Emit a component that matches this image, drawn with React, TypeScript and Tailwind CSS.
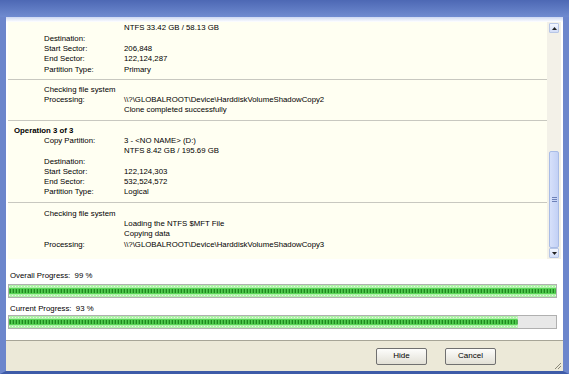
import React from "react";

type Row = { label?: string; value?: string };

const op2Top: Row[] = [
  { value: "NTFS 33.42 GB / 58.13 GB" },
  { label: "Destination:" },
  { label: "Start Sector:", value: "206,848" },
  { label: "End Sector:", value: "122,124,287" },
  { label: "Partition Type:", value: "Primary" },
];

const op2Check: Row[] = [
  { label: "Checking file system" },
  { label: "Processing:", value: "\\\\?\\GLOBALROOT\\Device\\HarddiskVolumeShadowCopy2" },
  { value: "Clone completed successfully" },
];

const op3Top: Row[] = [
  { label: "Copy Partition:", value: "3 - <NO NAME> (D:)" },
  { value: "NTFS 8.42 GB / 195.69 GB" },
  { label: "Destination:" },
  { label: "Start Sector:", value: "122,124,303" },
  { label: "End Sector:", value: "532,524,572" },
  { label: "Partition Type:", value: "Logical" },
];

const op3Check: Row[] = [
  { label: "Checking file system" },
  { value: "Loading the NTFS $MFT File" },
  { value: "Copying data" },
  { label: "Processing:", value: "\\\\?\\GLOBALROOT\\Device\\HarddiskVolumeShadowCopy3" },
];

function Rows({ rows }: { rows: Row[] }) {
  return (
    <div className="flex flex-col">
      {rows.map((r, i) => (
        <div key={i} className="flex h-[10.3px] items-center pl-[36px]">
          <span className="w-[80px] shrink-0 whitespace-nowrap">{r.label}</span>
          <span className="whitespace-nowrap">{r.value}</span>
        </div>
      ))}
    </div>
  );
}

function ProgressBar({ pct, id }: { pct: number; id: string }) {
  return (
    <div className="h-[14px] border border-[#b0b0b0] bg-[#e8e8e8]">
      <svg width="100%" height="12" className="block">
        <defs>
          <pattern id={id} width="3" height="12" patternUnits="userSpaceOnUse">
            <rect width="3" height="12" fill="#aef0a8" />
            <rect x="0" y="1" width="1" height="1" fill="#e6fbe2" />
            <rect x="0" y="10" width="1" height="1" fill="#e6fbe2" />
            <rect x="0" y="3" width="3" height="6" fill="#58d456" />
            <rect x="0.6" y="4" width="1.5" height="4" fill="#1e8a1e" />
          </pattern>
        </defs>
        <rect x="0" y="0" width={`${pct}%`} height="12" fill={`url(#${id})`} />
      </svg>
    </div>
  );
}

function XpButton({ children }: { children: React.ReactNode }) {
  return (
    <button className="h-[17px] w-[51px] rounded-[2px] border border-[#707070] bg-gradient-to-b from-[#fdfdfb] to-[#e2e0d6] text-[8px] text-black">
      {children}
    </button>
  );
}

export default function App() {
  return (
    <div
      className="flex h-[374px] w-[569px] flex-col overflow-hidden bg-[#3f5fb0] text-[7.8px] text-black"
      style={{ fontFamily: '"Liberation Sans", Arial, sans-serif' }}
    >
      {/* title bar remnant */}
      <div className="h-[17px] bg-gradient-to-b from-[#4d68b4] to-[#6f8bd0]" />
      <div className="flex flex-1 flex-col border-x-[6px] border-b-[3px] border-x-[#6c86cc] border-b-[#3e5ba8] bg-white">
        <div className="h-[5px] bg-gradient-to-b from-[#cbd7f2] to-white" />
        {/* list */}
        <div className="mx-[2px] flex h-[237px] bg-[#fffff2]">
          <div className="flex-1 overflow-hidden">
            <div className="pt-[1px]">
              <Rows rows={op2Top} />
            </div>
            <div className="mt-[5px] h-px w-full bg-[#c8c8c0]" />
            <div className="pt-[4px]">
              <Rows rows={op2Check} />
            </div>
            <div className="mt-[5px] h-px w-full bg-[#c8c8c0]" />
            <div className="pt-[4px]">
              <div className="flex h-[10.3px] items-center pl-[6px] font-bold">Operation 3 of 3</div>
              <Rows rows={op3Top} />
            </div>
            <div className="mt-[5px] h-px w-full bg-[#c8c8c0]" />
            <div className="pt-[5px]">
              <Rows rows={op3Check} />
            </div>
          </div>
          {/* scrollbar */}
          <div className="flex w-[14px] flex-col bg-[#f3f1e8] py-[1px] pl-[2px] pr-[2px]">
            <div className="flex h-[10px] items-center justify-center rounded-[1px] border border-[#b7c6e6] bg-gradient-to-b from-[#f4f7fe] to-[#d2ddf7]">
              <svg width="5" height="3" viewBox="0 0 5 3">
                <path d="M0 3 L2.5 0 L5 3 Z" fill="#222" />
              </svg>
            </div>
            <div className="flex-1" />
            <div className="flex h-[97px] items-center justify-center rounded-[2px] border border-[#a9bce6] bg-gradient-to-r from-[#d6e0fa] to-[#c3d1f5]">
              <svg width="5" height="6" viewBox="0 0 5 6">
                <path d="M0 0.5 H5 M0 2.5 H5 M0 4.5 H5" stroke="#6d81b8" strokeWidth="1" />
              </svg>
            </div>
            <div className="flex h-[10px] items-center justify-center rounded-[1px] border border-[#b7c6e6] bg-gradient-to-b from-[#f4f7fe] to-[#d2ddf7]">
              <svg width="5" height="3" viewBox="0 0 5 3">
                <path d="M0 0 L2.5 3 L5 0 Z" fill="#222" />
              </svg>
            </div>
          </div>
        </div>
        {/* progress */}
        <div className="flex flex-col pl-[2px] pr-[6px] pt-[12px]">
          <div className="pl-[2px] leading-[10px]">Overall Progress:&nbsp; 99 %</div>
          <div className="mt-[3px]">
            <ProgressBar pct={100} id="p1" />
          </div>
          <div className="mt-[6px] pl-[2px] leading-[10px]">Current Progress:&nbsp; 93 %</div>
          <div className="mt-[1px]">
            <ProgressBar pct={93} id="p2" />
          </div>
        </div>
        <div className="relative mt-[11px] flex flex-1 items-center justify-end gap-[18px] border-t border-[#a7a597] bg-[#ece9d8] pr-[67px]">
          <XpButton>Hide</XpButton>
          <XpButton>Cancel</XpButton>
          {/* resize grip */}
          <svg width="8" height="8" viewBox="0 0 8 8" className="absolute bottom-[1px] right-[1px]">
            <path d="M7 1 L1 7 M7 4 L4 7" stroke="#8a8878" strokeWidth="1" />
          </svg>
        </div>
      </div>
    </div>
  );
}
